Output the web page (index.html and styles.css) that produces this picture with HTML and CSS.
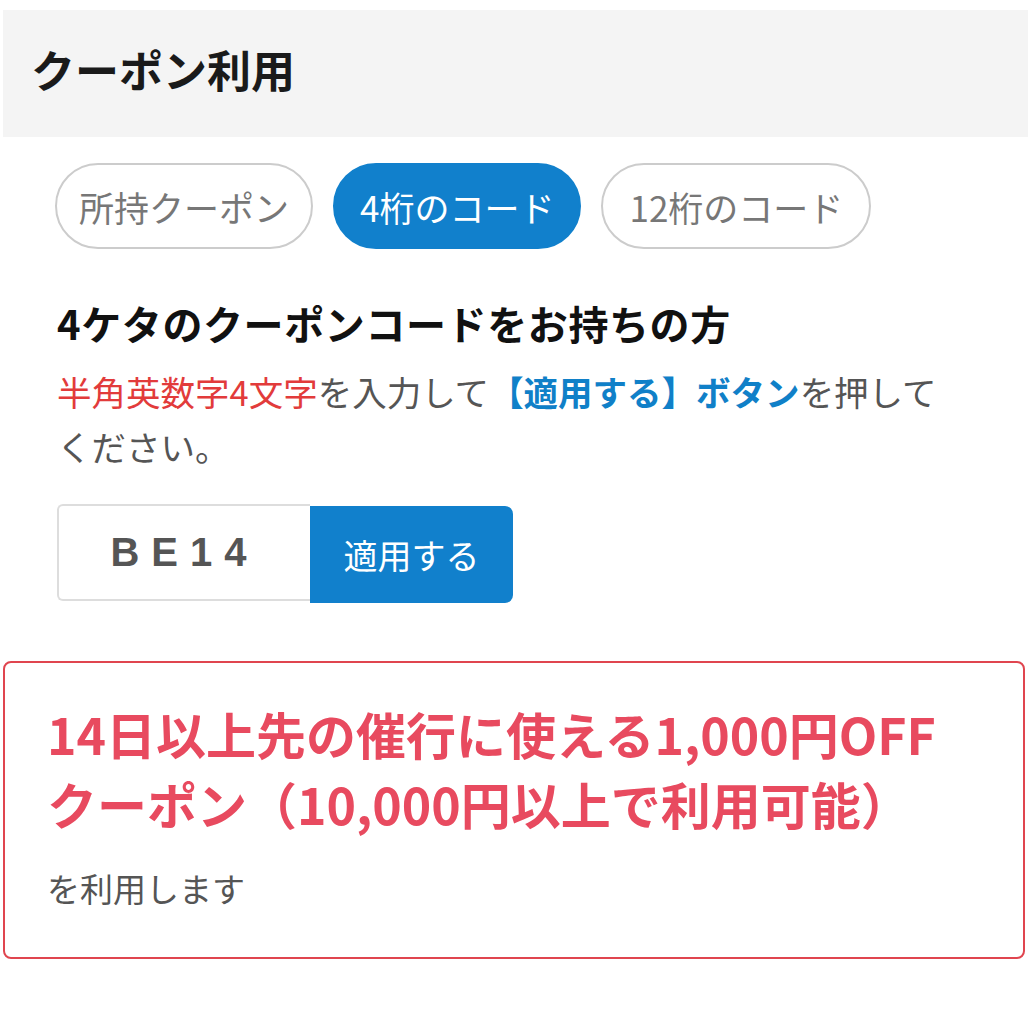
FILE: index.html
```html
<!DOCTYPE html>
<html lang="ja">
<head>
    <meta charset="UTF-8">
    <meta name="viewport" content="width=device-width, initial-scale=1.0">
    <title>クーポン利用</title>
    <link rel="stylesheet" href="styles.css">
</head>
<body>
    <header class="cabecalho">
        <h1>クーポン利用</h1>
    </header>

    <nav class="abas">
        <span class="aba">所持クーポン</span>
        <span class="aba ativa">4桁のコード</span>
        <span class="aba">12桁のコード</span>
    </nav>

    <section class="codigo">
        <h2>4ケタのクーポンコードをお持ちの方</h2>
        <p class="instrucao"><span class="vermelho">半角英数字4文字</span>を入力して<strong class="azul">【適用する】ボタン</strong>を押してください。</p>
        <div class="linha-codigo">
            <input type="text" class="campo" value="BE14" maxlength="4">
            <button class="aplicar">適用する</button>
        </div>
    </section>

    <div class="resultado">
        <p class="titulo-cupom">14日以上先の催行に使える1,000円OFFクーポン（10,000円以上で利用可能）</p>
        <p class="uso">を利用します</p>
    </div>
</body>
</html>
```

FILE: styles.css
```css
body {
    margin: 10px 0 0 3px;
    font-family: "Noto Sans CJK JP", "Noto Sans", sans-serif;
    color: #111;
    background-color: white;
}

header.cabecalho {
    box-sizing: border-box;
    background-color: #f4f4f4;
    height: 127px;
    display: flex;
    align-items: center;
    padding: 0 0 9px 28px;
}

header.cabecalho > h1 {
    margin: 0px;
    font-size: 44px;
    font-weight: 700;
    color: #1a1a1a;
}

nav.abas {
    display: flex;
    gap: 20px;
    margin: 26px 0 0 52px;
}

span.aba {
    height: 82px;
    padding: 0 22px;
    border: 2px solid #cccccc;
    border-radius: 43px;
    display: flex;
    align-items: center;
    font-size: 35px;
    color: #777;
}

span.aba.ativa {
    background-color: #1180cc;
    border-color: #1180cc;
    color: white;
    padding: 0 25px;
}

span.aba:last-child {
    padding: 0 26px;
}

section.codigo {
    padding: 0 60px 0 54px;
}

section.codigo > h2 {
    margin: 44px 0 0 0;
    font-size: 40px;
    line-height: 60px;
    font-weight: 700;
    letter-spacing: 0.6px;
}

p.instrucao {
    margin: 11px 0 0 0;
    font-size: 34.5px;
    line-height: 55px;
    color: #555;
}

.vermelho {
    color: #e23b3b;
}

.azul {
    color: #1080c8;
    font-weight: 700;
}

div.linha-codigo {
    display: flex;
    margin-top: 30px;
}

input.campo {
    box-sizing: border-box;
    width: 253px;
    height: 97px;
    margin: 0px;
    border: 2px solid #dddddd;
    border-right: none;
    border-radius: 6px 0 0 6px;
    font-family: "Liberation Sans", Arial, sans-serif;
    font-size: 40px;
    font-weight: 700;
    letter-spacing: 12px;
    text-align: center;
    color: #555;
    padding: 0px;
}

button.aplicar {
    width: 203px;
    height: 97px;
    margin: 2px 0 0 0;
    border: none;
    border-radius: 0 8px 8px 0;
    background-color: #1180cc;
    color: white;
    font-family: "Noto Sans CJK JP", sans-serif;
    font-size: 34px;
}

div.resultado {
    margin: 58px 3px 0 0;
    border: 2px solid #e0454f;
    border-radius: 8px;
    padding: 35px 40px 44px 42px;
}

p.titulo-cupom {
    margin: 0px;
    font-size: 50px;
    line-height: 70px;
    font-weight: 700;
    color: #e84a5f;
}

p.uso {
    margin: 25px 0 0 0;
    font-size: 33px;
    line-height: 50px;
    color: #555;
}
```
